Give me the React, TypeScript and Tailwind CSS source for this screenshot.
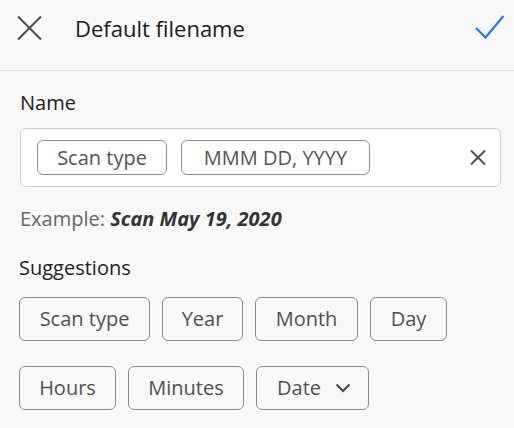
const chipsRow1 = [
  { label: "Scan type", w: "w-[131px]" },
  { label: "Year", w: "w-[81px]" },
  { label: "Month", w: "w-[103px]" },
  { label: "Day", w: "w-[77px]" },
];

const chipsRow2 = [
  { label: "Hours", w: "w-[97px]" },
  { label: "Minutes", w: "w-[116px]" },
];

function Chip({ label, w }: { label: string; w: string }) {
  return (
    <div
      className={`${w} h-[44px] flex items-center justify-center rounded-[6px] border-[1.5px] border-[#8c8c8c] text-[20px] text-[#505050] leading-none`}
    >
      {label}
    </div>
  );
}

export default function App() {
  return (
    <div
      className="w-[514px] h-[428px] bg-[#f8f8f8] overflow-hidden"
      style={{ fontFamily: '"Open Sans", "Noto Sans", sans-serif' }}
    >
      {/* header */}
      <div className="h-[71px] border-b-[1.5px] border-[#e0e0e0]">
        <div className="h-[56px] flex items-center pl-[17px] pr-[9px]">
          <svg width="25" height="25" viewBox="0 0 25 25" className="shrink-0">
            <path d="M1 0.5 L24 23.5 M24 0.5 L1 23.5" stroke="#4a4a4a" strokeWidth="2" fill="none" />
          </svg>
          <div className="ml-[33px] text-[22px] font-medium text-[#1b1b1b] leading-none">Default filename</div>
          <div className="flex-1" />
          <svg width="30" height="26" viewBox="0 0 30 26" className="shrink-0">
            <path d="M1 13 L10.5 22.5 L28.5 1" stroke="#2680eb" strokeWidth="2.4" fill="none" />
          </svg>
        </div>
      </div>

      <div className="pl-[19px] pr-[13px] pt-[18px]">
        <div className="pl-[1px] text-[20px] leading-[28px] text-[#222]">Name</div>

        <div className="mt-[11px] ml-[1px] h-[59px] rounded-[6px] border-[1.5px] border-[#cfcfcf] bg-white flex items-center pl-[16px] pr-[14px]">
          <div className="h-[35px] w-[130px] flex items-center justify-center rounded-[6px] border-[1.5px] border-[#8c8c8c] text-[20px] text-[#555] leading-none">
            Scan type
          </div>
          <div className="ml-[14px] h-[35px] w-[189px] flex items-center justify-center rounded-[6px] border-[1.5px] border-[#8c8c8c] text-[20px] text-[#555] leading-none">
            MMM DD, YYYY
          </div>
          <div className="flex-1" />
          <svg width="16" height="15" viewBox="0 0 16 15">
            <path d="M1 0.5 L15 14.5 M15 0.5 L1 14.5" stroke="#4f4f4f" strokeWidth="2" fill="none" />
          </svg>
        </div>

        <div className="mt-[18px] pl-[1px] text-[20px] leading-[27px] text-[#666]">
          Example: <span className="font-bold italic text-[#333]">Scan May 19, 2020</span>
        </div>

        <div className="mt-[22px] text-[20px] leading-[28px] text-[#222]">Suggestions</div>

        <div className="mt-[15px] flex gap-[12px]">
          {chipsRow1.map((c) => (
            <Chip key={c.label} label={c.label} w={c.w} />
          ))}
        </div>
        <div className="mt-[25px] flex gap-[12px]">
          {chipsRow2.map((c) => (
            <Chip key={c.label} label={c.label} w={c.w} />
          ))}
          <div className="w-[113px] h-[44px] flex items-center pl-[20px] pr-[17px] rounded-[6px] border-[1.5px] border-[#8c8c8c] text-[20px] text-[#505050] leading-none">
            Date
            <div className="flex-1" />
            <svg width="16" height="10" viewBox="0 0 16 10">
              <path d="M1.5 1.5 L8 8 L14.5 1.5" stroke="#4b4b4b" strokeWidth="2.2" fill="none" />
            </svg>
          </div>
        </div>
      </div>
    </div>
  );
}
